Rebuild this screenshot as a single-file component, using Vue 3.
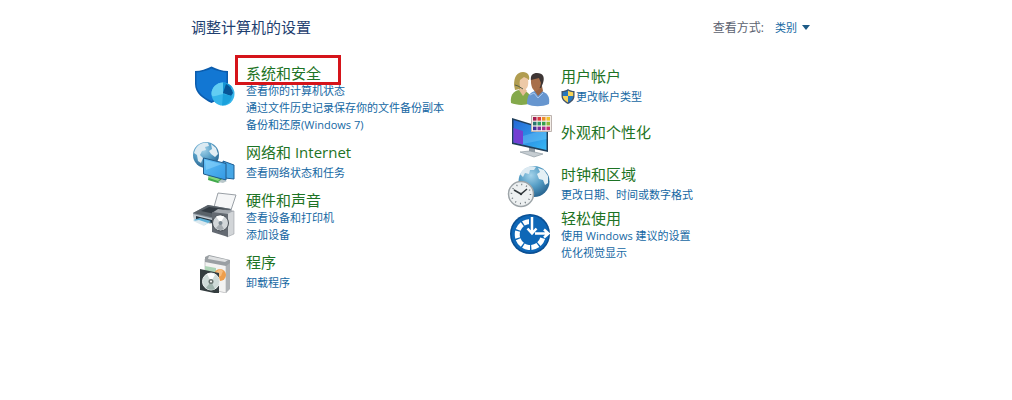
<template>
  <main class="panel">
    <header class="panel-header">
      <h1 class="panel-title">调整计算机的设置</h1>
      <div class="view-by">
        <label class="view-label" for="view-mode">查看方式:</label>
        <span class="view-picker">
          <select id="view-mode" v-model="viewMode" class="view-select">
            <option v-for="mode in viewModes" :key="mode" :value="mode">{{ mode }}</option>
          </select>
          <svg class="view-arrow" viewBox="0 0 8 5" aria-hidden="true"><path d="M0 0h8L4 5z" fill="#1c5a86" /></svg>
        </span>
      </div>
    </header>

    <div class="columns">
      <section v-for="(column, i) in columns" :key="i" class="column">
        <article
          v-for="item in column"
          :key="item.id"
          :class="['category', { single: item.links.length === 1, bare: !item.links.length }]"
        >
          <svg v-if="item.id === 'security'" class="icon" viewBox="0 0 44 42" aria-hidden="true">
            <path d="M4 7C10 7 15 5 20.500 2.500 26 5 31 7 37 7V20C37 29 29 35 20.500 39 12 35 4 29 4 20z" fill="#0b5cad" />
            <path d="M5.500 8.500C11 8 16 6.500 20.500 4.500 25 6.500 30 8 35.500 8.500V20C35.500 28 28 33.500 20.500 37 13 33.500 5.500 28 5.500 20z" fill="#1277d3" />
            <circle cx="32" cy="30" r="11.500" fill="#35b5ea" />
            <path d="M32 30V18.500A11.500 11.500 0 0 0 20.500 30C21 34 24 32 32 30z" fill="#62cdf3" />
            <path d="M32 30V18.500A11.500 11.500 0 0 1 41 23z" fill="#1596d4" />
            <path d="M32 29L35 20C39 22 41 25 42 29L40 32z" fill="#075596" />
            <path d="M32 30L41 32C40 38 36 41 31 41.500z" fill="#1ba1dc" />
          </svg>

          <svg v-else-if="item.id === 'network'" class="icon" viewBox="0 0 44 42" aria-hidden="true">
            <circle cx="15" cy="14" r="13" fill="url(#globe)" />
            <path d="M4 9C7 3 12 1 17 2L18 5 14 6 15 9 11 10 9 14 12 17 10 22 7 20 6 14 3 12z" fill="#dbeaf2" />
            <path d="M20 3L25 7 27 13 24 16 20 13 18 10 21 8z" fill="#e2eef4" />
            <path d="M18 33L31 37V40L27 42 17 39z" fill="#41a94b" />
            <path d="M18 34L29 38 27 40 18 37z" fill="#83d77c" />
            <path d="M31 38L36 40 32 42 27 41z" fill="#b9c7ca" />
            <path d="M32 20L43 24V38L34 37z" fill="#47a7e6" stroke="#1d5e95" />
            <path d="M12.500 17L35 22.500V39L12.500 33z" fill="url(#screen)" stroke="#225b8a" />
            <path d="M14 19L31 23 15 29z" fill="#9bddff" opacity=".45" />
          </svg>

          <svg v-else-if="item.id === 'hardware'" class="icon" viewBox="0 0 44 42" aria-hidden="true">
            <path d="M27 2L45 4 40 19 23 16z" fill="#f5f6f7" stroke="#9aa0a6" />
            <path d="M2 22L17 14 40 18 42 24 21 33 3 28z" fill="#858f99" />
            <path d="M2 22L17 14 40 18 24 27z" fill="#596168" />
            <path d="M10 20L18 16 34 18 24 23z" fill="#333b43" />
            <path d="M2 23L23 28V34L3 28z" fill="#c6cdd3" />
            <path d="M5 25L21 29V32L5 28z" fill="#26343f" />
            <path d="M2 29L9 27 20 30 14 34z" fill="#5cb0d7" />
            <path d="M2 30L8 29 17 32 13 35z" fill="#dce9ef" />
            <path d="M36 20L43 20V43L36 46z" fill="#d2d5d8" stroke="#9a9fa4" stroke-width=".6" />
            <path d="M21 22L27 18 43 20 36 23z" fill="#a4a9af" />
            <path d="M21 21L37 23V46L21 41z" fill="#646a72" />
            <circle cx="29.500" cy="32" r="8" fill="#d3d7da" stroke="#444b52" />
            <path d="M29.500 32L25 25.500C29 23.500 32 25 33 26z" fill="#fff" />
            <path d="M29.500 32L33 38C30 40 27 39 25 37z" fill="#a5abb0" />
            <circle cx="29.500" cy="32" r="2" fill="#7b8790" />
          </svg>

          <svg v-else-if="item.id === 'programs'" class="icon" viewBox="0 0 44 42" aria-hidden="true">
            <path d="M14 8L35 13V42L14 37z" fill="#f3f3f2" stroke="#bbbdbf" stroke-width=".8" />
            <path d="M35 13L39 10V38L35 42z" fill="#aeb2b5" />
            <path d="M14 6L18 4 39 9V12L35 15 14 11z" fill="#9a9fa3" />
            <path d="M18 5L37 9 34 11 17 8z" fill="#dfe1e2" />
            <path d="M14 15L25 17V24L14 21z" fill="#add4b6" />
            <circle cx="29" cy="24" r="6" fill="#ee9e4c" />
            <path d="M25 21L29 18 32 20 30 25 26 26z" fill="#f7bd7e" />
            <path d="M9 18L28 22V43L9 39z" fill="#343d3f" />
            <circle cx="20" cy="30.500" r="8.500" fill="#cfdbd8" stroke="#edf2f1" />
            <path d="M20 30.500L16 23C19 21.500 22 22 24 24z" fill="#fff" />
            <path d="M20 30.500L24 38C21 39.500 18 39 15 37z" fill="#9fb4ad" />
            <circle cx="20" cy="30.500" r="2.500" fill="#68736f" />
            <circle cx="20" cy="30.500" r="1" fill="#fff" />
          </svg>

          <svg v-else-if="item.id === 'accounts'" class="icon" viewBox="0 0 44 42" aria-hidden="true">
            <path d="M5 38C4 31 7 26 13 25L19 26C24 28 25 33 25 38 18 41 10 40 5 38z" fill="#84a94b" />
            <path d="M13 25L17 31 21 26 18 22H13z" fill="#e6bd96" />
            <path d="M8 20C8 12 11 7 17 7 22 7 24 11 23 15L18 13 14 24 9 25z" fill="#b19d50" />
            <path d="M14 15L18 12 22 14C23 21 21 25 17 25 14 24 13 20 14 15z" fill="#edc9a7" />
            <path d="M9 20L12 21 17 24" fill="none" stroke="#59604a" />
            <path d="M21 39C21 31 23 28 29 26L36 26C42 29 44 32 43 39 36 42 27 42 21 39z" fill="#6796cf" />
            <path d="M28 25L32 31 37 26 36 21 29 22z" fill="#9b6544" />
            <path d="M25 16C24 10 27 8 31 8 37 8 39 12 37 18L35 23 27 23z" fill="#3e3635" />
            <path d="M25 15L33 13 35 18C34 24 32 26 29 26 26 24 25 21 25 15z" fill="#a86f4b" />
            <path d="M24 30L28 28 32 33 37 28" fill="none" stroke="#a8c7ed" />
          </svg>

          <svg v-else-if="item.id === 'appearance'" class="icon" viewBox="0 0 44 42" aria-hidden="true">
            <path d="M23 36L29 38V43H23z" fill="#8f9aa3" />
            <path d="M14 41L24 40 37 43 28 46z" fill="#c6cdd2" stroke="#87929a" stroke-width=".6" />
            <path d="M6 7L42 18V41L6 33z" fill="#203f5a" />
            <path d="M7.500 9L40.500 19V39L7.500 31.500z" fill="url(#wide-screen)" />
            <path d="M7.500 17L17 20V33.500L7.500 31.500z" fill="#733fd2" />
            <path d="M17 25L40.500 18V28L17 33z" fill="#8fd6ff" opacity=".3" />
            <path d="M25.500 4.500H45.500V20.500H25.500z" fill="#f4eee8" stroke="#bdb3af" />
            <rect
              v-for="(color, n) in swatches"
              :key="n"
              :x="27 + (n % 4) * 4.5"
              :y="6 + Math.floor(n / 4) * 4.8"
              width="3.500"
              height="3.600"
              :fill="color"
            />
          </svg>

          <svg v-else-if="item.id === 'clock'" class="icon" viewBox="0 0 44 42" aria-hidden="true">
            <circle cx="28" cy="18.500" r="15.500" fill="url(#globe)" />
            <path d="M14 11C18 4 24 2 30 4L28 7 24 7 23 11 19 10 17 14z" fill="#dceaf2" />
            <path d="M32 5L38 7 42 13 42 20 39 22 37 17 33 16 31 11 34 9z" fill="#e5f0f5" />
            <circle cx="15" cy="31" r="12.500" fill="#edf0f1" stroke="#9da4a8" stroke-width="1.500" />
            <circle cx="15" cy="31" r="9.500" fill="none" stroke="#697278" stroke-width="1.500" stroke-dasharray="1 3.974" />
            <path d="M8 27L15 31 21 26" fill="none" stroke="#31373b" stroke-width="1.500" />
            <circle cx="15" cy="31" r="1.200" fill="#31373b" />
          </svg>

          <svg v-else class="icon" viewBox="0 0 44 42" aria-hidden="true">
            <circle cx="24" cy="25" r="20" fill="#0a4f93" />
            <circle cx="24" cy="25" r="18.500" fill="#0e67b7" />
            <path d="M24 12.500A13 13 0 1 0 37 28" fill="none" stroke="#fff" stroke-width="5" stroke-dasharray="7 1.300" />
            <path d="M26 8V24" stroke="#0e67b7" stroke-width="6" />
            <path d="M26 8V23M21.500 19.500L26 24.500 30.500 19.500M29 24.500H42M38 20.500L42.500 24.500 38 28.500" fill="none" stroke="#fff" stroke-width="2.500" />
          </svg>

          <div class="category-text">
            <h2 class="category-title">
              <a href="#" :class="['title-link', { marked: item.marked }]">{{ item.title }}</a>
            </h2>
            <ul v-if="item.links.length" class="links">
              <li v-for="link in item.links" :key="link" class="link-row">
                <svg v-if="item.shield" class="uac" viewBox="0 0 14 15" aria-hidden="true">
                  <path d="M7 0C9 1.500 11 2 13.500 2V7C13.500 11 10 13.500 7 15 4 13.500.5 11 .5 7V2C3 2 5 1.500 7 0z" fill="#40536b" />
                  <path d="M7 1.500V7H1.800V3.200C4 3 5.500 2.500 7 1.500zM7 7H12.200C12.200 10 10 12 7 13.500z" fill="#2777bd" />
                  <path d="M7 1.500C8.500 2.500 10 3 12.200 3.200V7H7zM7 7V13.500C4 12 1.800 10 1.800 7z" fill="#f7d457" />
                </svg>
                <a href="#" class="task-link">{{ link }}</a>
              </li>
            </ul>
          </div>
        </article>
      </section>
    </div>

    <!-- gradients shared by the category icons -->
    <svg class="defs" aria-hidden="true">
      <defs>
        <radialGradient id="globe" cx=".4" cy=".3" r=".75">
          <stop offset="0" stop-color="#a4d3ea" />
          <stop offset=".5" stop-color="#559dc5" />
          <stop offset="1" stop-color="#245f8b" />
        </radialGradient>
        <linearGradient id="screen" x1="0" y1="0" x2="1" y2="1">
          <stop offset="0" stop-color="#63bff5" />
          <stop offset="1" stop-color="#3299e4" />
        </linearGradient>
        <linearGradient id="wide-screen" x1="0" y1="0" x2="1" y2="1">
          <stop offset="0" stop-color="#2467d5" />
          <stop offset="1" stop-color="#35b8f5" />
        </linearGradient>
      </defs>
    </svg>
  </main>
</template>

<script setup>
import { ref } from 'vue';

const viewModes = ['类别', '大图标', '小图标'];
const viewMode = ref('类别');

const swatches = [
  '#a51d51', '#d93a3d', '#ee8b29', '#edc22b',
  '#28756f', '#2b9b63', '#34a04c', '#8fb83a',
  '#413098', '#7c329f', '#a62f91', '#c72c73'
];

const columns = [
  [
    {
      id: 'security',
      title: '系统和安全',
      marked: true,
      links: ['查看你的计算机状态', '通过文件历史记录保存你的文件备份副本', '备份和还原(Windows 7)']
    },
    { id: 'network', title: '网络和 Internet', links: ['查看网络状态和任务'] },
    { id: 'hardware', title: '硬件和声音', links: ['查看设备和打印机', '添加设备'] },
    { id: 'programs', title: '程序', links: ['卸载程序'] }
  ],
  [
    { id: 'accounts', title: '用户帐户', shield: true, links: ['更改帐户类型'] },
    { id: 'appearance', title: '外观和个性化', links: [] },
    { id: 'clock', title: '时钟和区域', links: ['更改日期、时间或数字格式'] },
    { id: 'ease', title: '轻松使用', links: ['使用 Windows 建议的设置', '优化视觉显示'] }
  ]
];
</script>

<style>
body {
  margin: 0;
  background: #fff;
}
</style>

<style scoped>
.panel {
  max-width: 630px;
  margin: 0 auto;
  padding-top: 16px;
  font-family: "Open Sans", "Noto Sans CJK SC", sans-serif;
  font-size: 11px;
  line-height: 17px;
}

.panel-header {
  display: flex;
  align-items: center;
  justify-content: space-between;
  padding-right: 11px;
  margin-bottom: 26px;
}

.panel-title {
  margin: 0;
  font-size: 15px;
  font-weight: 400;
  line-height: 22px;
  color: #1f3f70;
}

.view-by {
  display: flex;
  align-items: center;
  gap: 11px;
}

.view-label {
  font-size: 12px;
  color: #5c6270;
}

.view-picker {
  display: flex;
  align-items: center;
  position: relative;
}

.view-select {
  appearance: none;
  width: 35px;
  padding: 0;
  border: 0;
  background: transparent;
  font: inherit;
  color: #1467a3;
  cursor: pointer;
}

.view-arrow {
  position: absolute;
  right: 0;
  width: 8px;
  height: 5px;
  pointer-events: none;
}

.columns {
  display: grid;
  grid-template-columns: 1fr 1fr;
}

.column {
  display: flex;
  flex-direction: column;
  gap: 8px;
}

.column + .column {
  gap: 4px;
  padding-top: 1px;
}

.category {
  display: flex;
  gap: 11px;
}

.category.single,
.category.bare {
  align-items: center;
}

.category.bare {
  padding-bottom: 6px;
}

.icon {
  flex: none;
  width: 44px;
  height: 42px;
  overflow: visible;
}

.category-title {
  margin: 0;
  font-size: 15px;
  font-weight: 400;
  line-height: 18px;
}

.title-link {
  position: relative;
  display: inline-block;
  color: #1d7324;
  text-decoration: none;
}

.title-link.marked::after {
  content: "";
  position: absolute;
  top: -9px;
  left: -11px;
  box-sizing: border-box;
  width: 106px;
  height: 30px;
  border: 3px solid #d5141a;
}

.links {
  margin: 0;
  padding: 0;
  list-style: none;
}

.single .links {
  margin-top: 3px;
}

.link-row {
  display: flex;
  align-items: center;
  gap: 1px;
}

.uac {
  width: 14px;
  height: 15px;
}

.task-link {
  color: #1467a3;
  text-decoration: none;
}

.title-link:hover,
.task-link:hover {
  text-decoration: underline;
}

.defs {
  position: absolute;
  width: 0;
  height: 0;
}
</style>
